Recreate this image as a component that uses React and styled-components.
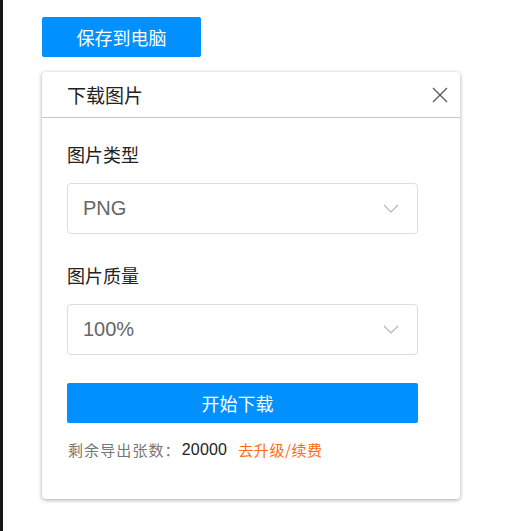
import React from "react";
import styled, { createGlobalStyle } from "styled-components";

const Global = createGlobalStyle`
  html, body { margin: 0; padding: 0; background: #fff; }
  body { font-family: "Noto Sans CJK SC", "Liberation Sans", sans-serif; }
  * { box-sizing: border-box; }
`;

const Page = styled.div`
  min-height: 531px;
  border-left: 3px solid #151515;
  padding: 17px 0 0 39px;
  display: flex;
  flex-direction: column;
  align-items: flex-start;
`;

const PrimaryButton = styled.button`
  border: none;
  border-radius: 2px;
  background: #0090ff;
  color: #fff;
  font-family: "Noto Sans CJK SC", sans-serif;
  font-size: 18px;
  height: 40px;
  width: ${(p) => p.$width || "100%"};
  padding: 0 ${(p) => p.$shift || 0}px 0 0;
  display: flex;
  align-items: center;
  justify-content: center;
  cursor: pointer;
`;

const Card = styled.section`
  margin-top: 15px;
  width: 418px;
  height: 427px;
  background: #fff;
  border-radius: 4px;
  box-shadow: 0 1px 4px rgba(0, 0, 0, 0.35);
  display: flex;
  flex-direction: column;
`;

const Header = styled.header`
  height: 46px;
  border-bottom: 1px solid #c8c8c8;
  display: flex;
  align-items: center;
  justify-content: space-between;
  padding: 0 10px 0 25px;
`;

const Title = styled.h2`
  margin: 0;
  font-size: 19px;
  font-weight: 400;
  color: #222;
`;

const Close = styled.button`
  border: none;
  background: none;
  padding: 0;
  width: 20px;
  height: 20px;
  display: flex;
  align-items: center;
  justify-content: center;
  cursor: pointer;
`;

const Body = styled.div`
  padding: 23px 42px 0 25px;
  display: flex;
  flex-direction: column;
`;

const Label = styled.div`
  font-size: 18px;
  line-height: 26px;
  color: #222;
  margin-top: ${(p) => p.$top || 0}px;
`;

const Select = styled.div`
  margin-top: 16px;
  height: 51px;
  border: 1px solid #dcdcdc;
  border-radius: 4px;
  display: flex;
  align-items: center;
  justify-content: space-between;
  padding: 0 18px 0 15px;
  font-family: "Liberation Sans", Arial, sans-serif;
  font-size: 20px;
  color: #666;
`;

const ActionRow = styled.div`
  margin-top: 28px;
`;

const Footer = styled.div`
  margin-top: 17px;
  font-size: 15px;
  line-height: 20px;
  letter-spacing: 1.1px;
  color: #777;
  padding-left: 1px;
  display: flex;
  align-items: center;
`;

const Count = styled.span`
  color: #222;
  font-family: "Liberation Sans", Arial, sans-serif;
  font-size: 16px;
  letter-spacing: 0.2px;
  margin: 0 11px 0 1px;
`;

const Link = styled.a`
  color: #ff6a13;
  letter-spacing: 0.6px;
  text-decoration: none;
  cursor: pointer;
`;

const Chevron = () => (
  <svg width="16" height="9" viewBox="0 0 16 9" fill="none">
    <path d="M1 1l7 7 7-7" stroke="#b5b5b5" strokeWidth="1.2" />
  </svg>
);

const CloseIcon = () => (
  <svg width="16" height="16" viewBox="0 0 16 16" fill="none">
    <path d="M1 1l14 14M15 1L1 15" stroke="#555" strokeWidth="1.3" />
  </svg>
);

export default function App() {
  return (
    <>
      <Global />
      <Page>
        <PrimaryButton $width="159px">保存到电脑</PrimaryButton>
        <Card>
          <Header>
            <Title>下载图片</Title>
            <Close aria-label="close">
              <CloseIcon />
            </Close>
          </Header>
          <Body>
            <Label>图片类型</Label>
            <Select>
              <span>PNG</span>
              <Chevron />
            </Select>
            <Label $top={28}>图片质量</Label>
            <Select>
              <span>100%</span>
              <Chevron />
            </Select>
            <ActionRow>
              <PrimaryButton $shift={10}>开始下载</PrimaryButton>
            </ActionRow>
            <Footer>
              剩余导出张数：<Count>20000</Count>
              <Link>去升级/续费</Link>
            </Footer>
          </Body>
        </Card>
      </Page>
    </>
  );
}
